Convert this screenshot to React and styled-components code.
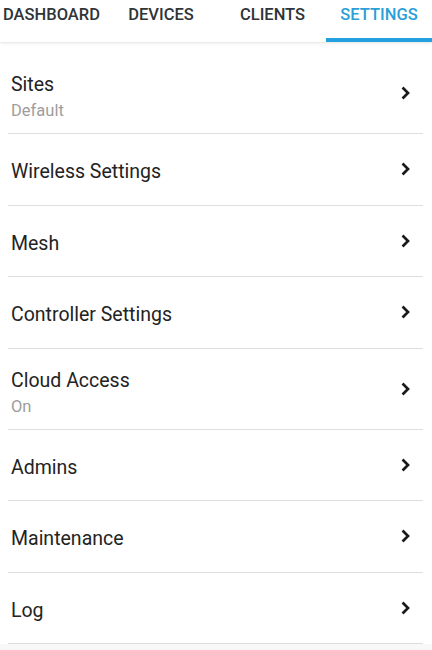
import React from 'react';
import styled, { createGlobalStyle } from 'styled-components';

const GlobalStyle = createGlobalStyle`
  html, body {
    margin: 0;
    padding: 0;
    background: #f8f8f8;
    font-family: Roboto, "Noto Sans", "Liberation Sans", sans-serif;
  }
`;

const Page = styled.div`
  width: 432px;
  min-height: 650px;
  background: #f8f8f8;
  overflow: hidden;
`;

const TabBar = styled.div`
  display: flex;
  height: 42px;
  background: #ffffff;
  box-shadow: 0 1px 3px rgba(0, 0, 0, 0.12);
  position: relative;
  z-index: 1;
`;

const Tab = styled.div`
  display: flex;
  align-items: center;
  justify-content: center;
  width: ${p => p.$w}px;
  padding: 4px 0 14px;
  box-sizing: border-box;
  height: 42px;
  font-size: 16.5px;
  font-weight: 500;
  text-transform: uppercase;
  color: ${p => (p.$active ? '#2a9fd8' : '#2f3438')};
  border-bottom: 4px solid ${p => (p.$active ? '#23a0df' : 'transparent')};
`;

const List = styled.div`
  display: flex;
  flex-direction: column;
  padding-top: 11px;
  background: #ffffff;
`;

const Row = styled.div`
  display: flex;
  align-items: center;
  justify-content: space-between;
  box-sizing: border-box;
  height: ${p => (p.$tall ? 81 : 71.5)}px;
  margin: 0 9px 0 8px;
  padding: 0 12px 0 3px;
  border-bottom: 1px solid #dedede;
`;

const Texts = styled.div`
  display: flex;
  flex-direction: column;
  gap: 6px;
  padding-top: ${p => (p.$tall ? 8 : 5)}px;
`;

const Title = styled.div`
  font-size: 19.5px;
  color: #232323;
  line-height: 21px;
`;

const Sub = styled.div`
  font-size: 16.5px;
  color: #9d9d9d;
  line-height: 19px;
`;

const Chevron = () => (
  <svg width="10" height="14" viewBox="0 0 10 14">
    <path d="M2.5 2.5 L7 7 L2.5 11.5" fill="none" stroke="#1a1a1a" strokeWidth="2.7" strokeLinecap="square" />
  </svg>
);

const tabs = [
  { label: 'Dashboard', w: 103 },
  { label: 'Devices', w: 116 },
  { label: 'Clients', w: 107 },
  { label: 'Settings', w: 106, active: true },
];

const items = [
  { title: 'Sites', sub: 'Default' },
  { title: 'Wireless Settings' },
  { title: 'Mesh' },
  { title: 'Controller Settings' },
  { title: 'Cloud Access', sub: 'On' },
  { title: 'Admins' },
  { title: 'Maintenance' },
  { title: 'Log' },
];

export default function App() {
  return (
    <Page>
      <GlobalStyle />
      <TabBar>
        {tabs.map(t => (
          <Tab key={t.label} $w={t.w} $active={t.active}>{t.label}</Tab>
        ))}
      </TabBar>
      <List>
        {items.map(it => (
          <Row key={it.title} $tall={!!it.sub}>
            <Texts $tall={!!it.sub}>
              <Title>{it.title}</Title>
              {it.sub && <Sub>{it.sub}</Sub>}
            </Texts>
            <Chevron />
          </Row>
        ))}
      </List>
    </Page>
  );
}
